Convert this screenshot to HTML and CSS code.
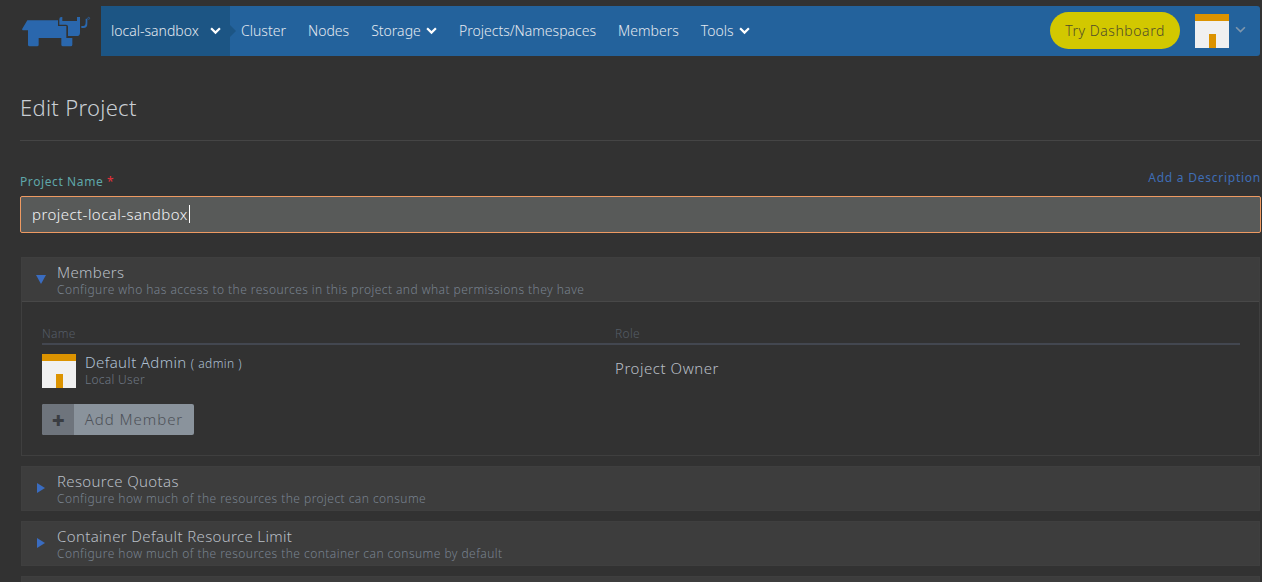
FILE: index.html
```html
<!DOCTYPE html>
<html lang="en">
<head>
<meta charset="utf-8">
<title>Edit Project</title>
<link rel="stylesheet" href="styles.css">
</head>
<body>
<header class="topbar">
  <a class="logo" href="#" aria-label="Rancher">
    <svg width="76" height="38" viewBox="0 0 228 114"><path fill="#2a67ad" d="M12 52L28 25H120V42H145V78H163V98Q163 103 158 103H135Q130 103 130 98V78H62V98Q62 103 57 103H35Q30 103 30 98V55H14Z"/><path fill="#2a67ad" d="M124 22Q124 15 130 15H133V27H177V15H186V62Q186 72 176 72H150V44Q150 38 144 38H124Z"/><path fill="#2a67ad" d="M190 42H196Q203 42 203 30V20H208V35Q208 48 196 48H190Z"/><circle cx="212" cy="19" r="3" fill="none" stroke="#2a67ad" stroke-width="2"/></svg>
  </a>
  <nav class="nav">
    <a class="nav-env" href="#">local-sandbox <svg class="chev chev-env" viewBox="0 0 10 7"><path d="M1 1l4 4 4-4"/></svg></a>
    <a class="nav-item first" href="#">Cluster</a>
    <a class="nav-item" href="#">Nodes</a>
    <a class="nav-item" href="#">Storage <svg class="chev" viewBox="0 0 10 7"><path d="M1 1l4 4 4-4"/></svg></a>
    <a class="nav-item" href="#">Projects/Namespaces</a>
    <a class="nav-item" href="#">Members</a>
    <a class="nav-item" href="#">Tools <svg class="chev" viewBox="0 0 10 7"><path d="M1 1l4 4 4-4"/></svg></a>
  </nav>
  <div class="top-right">
    <a class="try" href="#">Try Dashboard</a>
    <span class="avatar avatar-top"><svg viewBox="0 0 34 34"><rect width="34" height="34" fill="#f0f0f0"/><rect width="34" height="7" fill="#dc9300"/><rect x="14" y="20" width="7" height="14" fill="#dc9300"/></svg></span>
    <svg class="chev chev-user" viewBox="0 0 10 7"><path d="M1 1l4 4 4-4"/></svg>
  </div>
</header>

<main class="page">
  <h1 class="title">Edit Project</h1>
  <div class="field-head">
    <label class="label" for="pname">Project Name <span class="req">*</span></label>
    <a class="add-desc" href="#">Add a Description</a>
  </div>
  <div class="input"><span id="pname">project-local-sandbox</span><i class="caret"></i></div>

  <section class="panel">
    <div class="panel-head">
      <span class="tri tri-down"></span>
      <div><div class="panel-title">Members</div><div class="panel-sub">Configure who has access to the resources in this project and what permissions they have</div></div>
    </div>
    <div class="panel-body">
      <div class="table-head"><span class="col-name">Name</span><span>Role</span></div>
      <div class="member">
        <div class="col-name who">
          <span class="avatar"><svg viewBox="0 0 34 34"><rect width="34" height="34" fill="#f0f0f0"/><rect width="34" height="7" fill="#dc9300"/><rect x="14" y="20" width="7" height="14" fill="#dc9300"/></svg></span>
          <div class="who-text"><div class="who-name">Default Admin <small>( admin )</small></div><div class="who-sub">Local User</div></div>
        </div>
        <div class="role">Project Owner</div>
      </div>
      <button class="add-btn" type="button"><span class="add-plus">✚</span><span class="add-text">Add Member</span></button>
    </div>
  </section>

  <section class="panel">
    <div class="panel-head closed">
      <span class="tri tri-right"></span>
      <div><div class="panel-title">Resource Quotas</div><div class="panel-sub">Configure how much of the resources the project can consume</div></div>
    </div>
  </section>
  <section class="panel">
    <div class="panel-head closed">
      <span class="tri tri-right"></span>
      <div><div class="panel-title">Container Default Resource Limit</div><div class="panel-sub">Configure how much of the resources the container can consume by default</div></div>
    </div>
  </section>
  <section class="panel panel-cut"><div class="panel-head closed cut"></div></section>
</main>
</body>
</html>
```
FILE: styles.css
```css
* { box-sizing: border-box; }
html, body { height: 582px; overflow: hidden; }
body { margin: 0; background: #323232; color: #c5ccd6; font-family: "Noto Sans", "Open Sans", sans-serif; font-weight: 300; }
a { text-decoration: none; color: inherit; }

.topbar { display: flex; height: 50px; margin: 6px 2px 0 0; }
.logo { width: 101px; flex: none; padding: 6px 0 0 18px; }
.logo svg { display: block; }
.nav { display: flex; align-items: stretch; background: #23629c; flex: none; font-size: 14px; line-height: 48px; letter-spacing: .01px; color: #e3e9f0; }
.nav-env { position: relative; display: flex; align-items: center; width: 129px; padding-left: 10px; background: #1c5584; }
.nav-env::after { content: ""; position: absolute; left: 100%; top: 19px; border: 6px solid transparent; border-left-color: #1c5584; border-right-width: 0; }
.nav-item { display: flex; align-items: center; padding: 0 11px; white-space: pre; }
.nav-item.first { padding-left: 11px; }
.chev { width: 11px; height: 8px; margin-left: 1.500px; fill: none; stroke: #fff; stroke-width: 2; }
.chev-env { margin-left: 11px; }
.top-right { flex: 1; display: flex; align-items: center; justify-content: flex-end; background: #23629c; border-radius: 0 3px 3px 0; padding: 0 14px 2px 0; }
.try { width: 130px; height: 37px; margin-right: 15px; border-radius: 19px; background: #d2c800; color: #4f4b2a; font-size: 14px; font-weight: 300; letter-spacing: .55px; display: flex; align-items: center; justify-content: center; }
.avatar { display: block; width: 34px; height: 34px; flex: none; }
.avatar-top { margin-top: 2px; }
.avatar svg { display: block; width: 34px; height: 34px; }
.chev-user { margin-left: 6px; stroke: #7f97ad; stroke-width: 1.500; }

.page { padding: 0 1px 0 20px; }
.title { margin: 0; height: 85px; padding-top: 36px; border-bottom: 1px solid #454545; font-size: 22px; line-height: 30px; font-weight: 300; letter-spacing: .3px; color: #c9ced4; }
.field-head { display: flex; justify-content: space-between; align-items: flex-start; height: 55px; padding-top: 29px; }
.label { padding-top: 2px; font-size: 12px; line-height: 20px; color: #5fa7a9; font-weight: 400; letter-spacing: .6px; }
.req { color: #e8303a; }
.add-desc { font-size: 12px; line-height: 16px; margin: 0; color: #3f6db5; font-weight: 400; letter-spacing: .75px; }
.input { display: flex; align-items: center; height: 37px; padding: 0 0 2px 11px; background: #585a59; border: 1px solid #ee9a62; border-radius: 2px; font-size: 15px; letter-spacing: .45px; color: #f2f4f6; font-weight: 300; }
.caret { display: block; width: 1px; height: 18px; background: #fff; margin-left: 1px; }

.panel { margin: 0 1px 10px 1px; border: 1px solid #3f3f3f; }
.panel:first-of-type { margin-top: 24px; }
.panel-head { display: flex; align-items: flex-start; height: 44px; padding: 5px 0 0 14px; background: #3d3d3d; border-bottom: 1px solid #484848; }
.panel-head.closed { height: 43px; border-bottom: 0; }
.panel-head.cut { height: 5px; padding: 0; }
.panel-title { font-size: 15px; line-height: 18px; letter-spacing: .35px; color: #b9bfc6; }
.panel-sub { margin-top: 1px; font-size: 12px; line-height: 15px; letter-spacing: .45px; color: #78828f; }
.tri { flex: none; width: 0; height: 0; margin-right: 11px; border-style: solid; border-color: transparent; }
.tri-down { margin-top: 12px; border-width: 9px 5px 0; border-top-color: #3a6cc0; }
.tri-right { margin-top: 11px; margin-left: 1px; margin-right: 12px; border-width: 5.500px 0 5.500px 8px; border-left-color: #3a6cc0; }

.panel-body { padding: 24px 19px 0 20px; height: 153px; }
.table-head { display: flex; height: 19px; line-height: 16px; font-size: 12px; letter-spacing: .3px; color: #555d67; border-bottom: 2px solid #434750; }
.col-name { width: 573px; flex: none; }
.member { display: flex; align-items: center; height: 40px; margin-top: 6px; }
.who { display: flex; gap: 9px; align-items: flex-start; }
.who-text { margin-top: -1px; }
.who-name { font-size: 15px; line-height: 18px; letter-spacing: .35px; color: #afc0d2; }
.who-name small { font-size: 12px; letter-spacing: .45px; }
.who-sub { margin-top: -1px; font-size: 12px; line-height: 15px; letter-spacing: .3px; color: #6e7682; }
.role { margin-bottom: 6px; font-size: 15px; letter-spacing: .55px; color: #b9bfc6; }
.add-btn { display: flex; align-items: stretch; padding: 0; margin: 13px 0 0; width: 152px; height: 31px; border: 0; border-radius: 2px; background: #8a939c; overflow: hidden; font-family: inherit; cursor: pointer; }
.add-plus { display: flex; align-items: center; justify-content: center; width: 32px; background: #6e747c; color: #3a3d42; font-size: 15px; }
.add-text { flex: 1; text-align: center; line-height: 30px; font-size: 15px; font-weight: 300; color: #4d5158; letter-spacing: .95px; }
.panel-cut { margin-bottom: 0; border-bottom: 0; }
```
